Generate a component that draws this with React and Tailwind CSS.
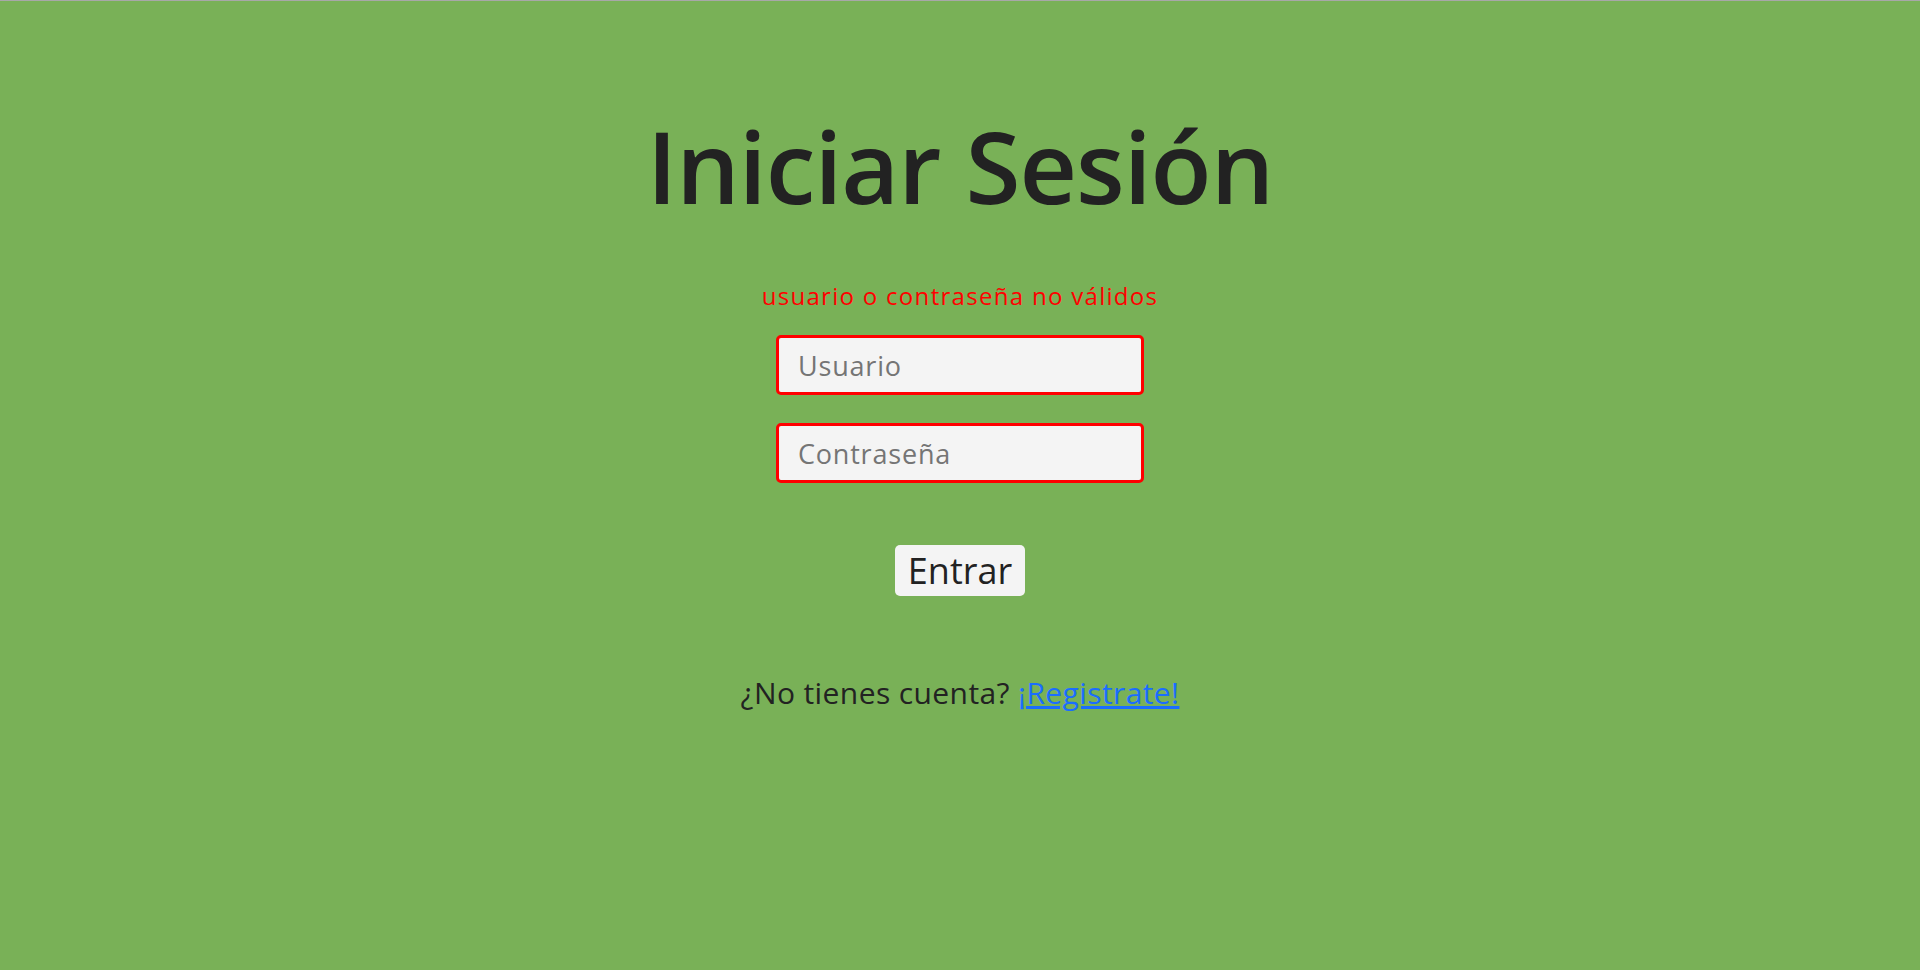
import React from 'react';

export default function App() {
  return (
    <div className="min-h-screen bg-[#79b157] border-t border-[#a8a8a8] font-['Open_Sans',sans-serif] flex flex-col items-center">
      {/* Title */}
      <h1 className="mt-[114px] text-[100px] leading-none font-semibold tracking-[-1px] text-[#222222]">Iniciar Sesión</h1>

      {/* Login form */}
      <form className="mt-[66px] flex flex-col items-center" onSubmit={(e) => e.preventDefault()}>
        <p className="text-[24px] leading-[30px] tracking-[1.3px] text-[#ff0000]">usuario o contraseña no válidos</p>
        <input
          type="text"
          placeholder="Usuario"
          className="mt-[24px] w-[368px] h-[60px] px-[19px] bg-[#f4f4f4] border-[3px] border-[#ff0000] rounded-[5px] text-[27px] tracking-[0.8px] text-[#222] placeholder:text-[#757575] outline-none"
        />
        <input
          type="password"
          placeholder="Contraseña"
          className="mt-[28px] w-[368px] h-[60px] px-[19px] bg-[#f4f4f4] border-[3px] border-[#ff0000] rounded-[5px] text-[27px] tracking-[0.8px] text-[#222] placeholder:text-[#757575] outline-none"
        />
        <button
          type="submit"
          className="mt-[62px] w-[130px] h-[51px] bg-[#f4f4f4] rounded-[5px] text-[36px] leading-none text-[#222]"
        >
          Entrar
        </button>
      </form>

      <p className="mt-[74px] text-[30px] tracking-[0.4px] text-[#222]">
        ¿No tienes cuenta? <a href="#" className="text-[#1a6dff] underline">¡Registrate!</a>
      </p>
    </div>
  );
}
